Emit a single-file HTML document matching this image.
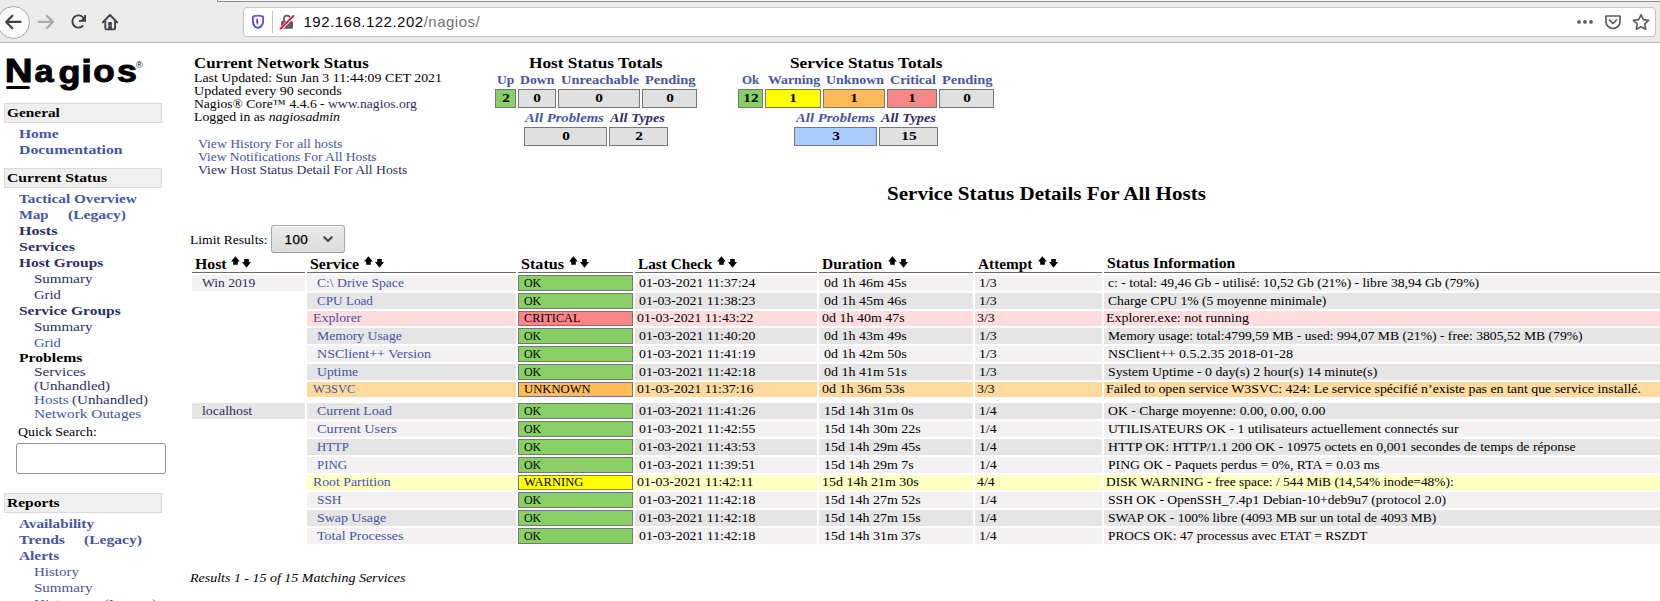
<!DOCTYPE html>
<html><head><meta charset="utf-8"><title>Nagios</title><style>
*{margin:0;padding:0;box-sizing:border-box}
html,body{width:1660px;height:601px;overflow:hidden;background:#fff}
body{position:relative;font-family:"Liberation Serif",serif}
.t{position:absolute;white-space:nowrap;line-height:20px;transform-origin:0 0}
.r{position:absolute}
.n11{font-size:12.5px;font-weight:normal;font-style:normal}
.b13{font-size:14.5px;font-weight:bold;font-style:normal}
.b12{font-size:13.3px;font-weight:bold;font-style:normal}
.th{font-size:14px;font-weight:bold;font-style:normal}
.n12{font-size:13.5px;font-weight:normal;font-style:normal}
.b16{font-size:17.8px;font-weight:bold;font-style:normal}
.b11{font-size:12.2px;font-weight:bold;font-style:normal}
.bi11{font-size:12.2px;font-weight:bold;font-style:italic}
.i11{font-size:12.4px;font-weight:normal;font-style:italic}
</style></head>
<body>
<div class="r" style="left:0px;top:0px;width:1660px;height:42px;background:#ebebea;"></div>
<div class="r" style="left:0px;top:42px;width:1660px;height:1px;background:#b6b6b0;"></div>
<div class="r" style="left:217px;top:0px;width:1443px;height:1px;background:#f6f6f6;"></div>
<div class="r" style="left:217px;top:1px;width:1443px;height:1px;background:#8e8e8e;"></div>
<div class="r" style="left:217px;top:0px;width:1px;height:2px;background:#8e8e8e;"></div>
<div class="r" style="left:-3px;top:5.5px;width:33px;height:33px;border-radius:50%;background:#fafafa;border:1px solid #a9a9a9"></div>

<svg class="r" style="left:0;top:0" width="140" height="42" viewBox="0 0 140 42">
 <g fill="none" stroke="#3d4044" stroke-width="2.1" stroke-linecap="round" stroke-linejoin="round">
  <path d="M6.2 21.9 H20.6 M12.3 15.7 L6.2 21.9 L12.3 28.2"/>
 </g>
 <g fill="none" stroke="#a9abaa" stroke-width="2.1" stroke-linecap="round" stroke-linejoin="round">
  <path d="M38.6 21.9 H53 M46.8 15.7 L53 21.9 L46.8 28.2"/>
 </g>
 <g fill="none" stroke="#3d4044" stroke-width="1.9" stroke-linecap="round">
  <path d="M83.2 17.6 A6.1 6.1 0 1 0 82.6 26"/>
 </g>
 <path d="M79 21.8 H86 V15 H84.3 V20.1 H79 Z" fill="#3d4044"/>
 <path d="M83 17.8 L84.6 16 L86 21 L80 21.5 Z" fill="#3d4044"/>
 <path d="M102.8 22.4 L110 15 L117.2 22.4" fill="none" stroke="#3d4044" stroke-width="1.9" stroke-linecap="round" stroke-linejoin="round"/>
 <path d="M105.3 20.5 V28 Q105.3 29.4 106.7 29.4 H113.7 Q115.1 29.4 115.1 28 V20.5" fill="none" stroke="#3d4044" stroke-width="1.9" stroke-linejoin="round"/>
 <rect x="108.3" y="22" width="3.5" height="7.4" fill="#3d4044"/>
 <circle cx="110.4" cy="25.6" r="0.6" fill="#bbb"/>
</svg>

<div class="r" style="left:243px;top:7px;width:1413px;height:30px;background:#fff;border:1px solid #c4c4c4;border-radius:4px"></div>
<svg class="r" style="left:245px;top:8px" width="60" height="28" viewBox="245 8 60 28">
 <defs><linearGradient id="sg" x1="0" y1="0" x2="0" y2="1"><stop offset="0" stop-color="#7c4df6"/><stop offset="1" stop-color="#3548d6"/></linearGradient></defs>
 <path d="M252.9 16.6 Q258 14.6 263.1 16.6 V21.6 Q262.8 26.6 258 28 Q253.2 26.6 252.9 21.6 Z" fill="none" stroke="url(#sg)" stroke-width="1.8"/>
 <path d="M256.3 18.8 H258 V25 Q256.8 24 256.3 23 Z" fill="#4b45e0"/>
 <rect x="272" y="11" width="1" height="22" fill="#c4c4c4"/>
 <rect x="281" y="21" width="12" height="7.8" rx="1.2" fill="#5f5f5f"/>
 <path d="M284 21.5 V18.6 A3 3 0 0 1 290 18.6 V21.5" fill="none" stroke="#5f5f5f" stroke-width="1.8"/>
 <path d="M280 29.6 L294.2 15.4" stroke="#fff" stroke-width="3.4"/>
 <path d="M280.6 28.6 L293.4 15.8" stroke="#ff0039" stroke-width="1.9" stroke-linecap="round"/>
</svg>
<div class="t" style="left:303.5px;top:12px;font-family:'Liberation Sans',sans-serif;font-size:15px;line-height:20px;letter-spacing:0.5px;color:#0c0c0d">192.168.122.202<span style="color:#737373">/nagios/</span></div>
<svg class="r" style="left:1570px;top:8px" width="85" height="28" viewBox="1570 8 85 28">
 <circle cx="1579" cy="21.9" r="1.9" fill="#5b5b5f"/><circle cx="1585" cy="21.9" r="1.9" fill="#5b5b5f"/><circle cx="1591" cy="21.9" r="1.9" fill="#5b5b5f"/>
 <path d="M1606 16 H1620 V21.5 A7 7 0 0 1 1606 21.5 Z" fill="none" stroke="#5b5b5f" stroke-width="1.7" stroke-linejoin="round"/>
 <path d="M1609.5 20 L1613 23.5 L1616.5 20" fill="none" stroke="#5b5b5f" stroke-width="1.7" stroke-linecap="round" stroke-linejoin="round"/>
 <path d="M1641 14.8 L1643.3 19.6 L1648.6 20.3 L1644.7 24 L1645.7 29.2 L1641 26.7 L1636.3 29.2 L1637.3 24 L1633.4 20.3 L1638.7 19.6 Z" fill="none" stroke="#5b5b5f" stroke-width="1.6" stroke-linejoin="round"/>
</svg>
<div class="r" style="left:0;top:0;font-family:'Liberation Sans',sans-serif;font-weight:bold;font-size:40px;line-height:60px;-webkit-text-stroke:1.2px #000;color:#000;transform-origin:0 0;transform:matrix(0.9640,0,0,0.8133,4.67,46.10)">N</div>
<div class="r" style="left:0;top:0;font-family:'Liberation Sans',sans-serif;font-weight:bold;font-size:40px;line-height:60px;-webkit-text-stroke:1.2px #000;color:#000;transform-origin:0 0;transform:matrix(0.8591,0,0,0.7870,34.44,47.29)">a</div>
<div class="r" style="left:0;top:0;font-family:'Liberation Sans',sans-serif;font-weight:bold;font-size:40px;line-height:60px;-webkit-text-stroke:1.2px #000;color:#000;transform-origin:0 0;transform:matrix(0.9000,0,0,0.7844,58.50,48.13)">g</div>
<div class="r" style="left:0;top:0;font-family:'Liberation Sans',sans-serif;font-weight:bold;font-size:40px;line-height:60px;-webkit-text-stroke:1.2px #000;color:#000;transform-origin:0 0;transform:matrix(0.9571,0,0,0.7750,81.29,47.82)">i</div>
<div class="r" style="left:0;top:0;font-family:'Liberation Sans',sans-serif;font-weight:bold;font-size:40px;line-height:60px;-webkit-text-stroke:1.2px #000;color:#000;transform-origin:0 0;transform:matrix(0.8783,0,0,0.7739,93.22,47.87)">o</div>
<div class="r" style="left:0;top:0;font-family:'Liberation Sans',sans-serif;font-weight:bold;font-size:40px;line-height:60px;-webkit-text-stroke:1.2px #000;color:#000;transform-origin:0 0;transform:matrix(0.8950,0,0,0.8043,116.91,46.50)">s</div>
<div class="r" style="left:6px;top:86px;width:24px;height:3px;background:#000;border-radius:2px"></div>
<div class="t" style="left:136px;top:58px;font-family:'Liberation Sans',sans-serif;font-size:9px;line-height:14px;color:#000">&reg;</div>
<div class="r" style="left:4px;top:103px;width:158px;height:20px;background:#efefef;border:1px solid #d9d9d9"></div>
<div class="t b12" style="left:7px;top:103px;color:#000;transform:scaleX(1.1552);">General</div>
<div class="t b12" style="left:19px;top:124px;color:#4554a6;transform:scaleX(1.1678);">Home</div>
<div class="t b12" style="left:19px;top:140px;color:#4554a6;transform:scaleX(1.1891);">Documentation</div>
<div class="r" style="left:4px;top:168px;width:158px;height:20px;background:#efefef;border:1px solid #d9d9d9"></div>
<div class="t b12" style="left:7px;top:168px;color:#000;transform:scaleX(1.1754);">Current Status</div>
<div class="t b12" style="left:19px;top:189px;color:#4554a6;transform:scaleX(1.1477);">Tactical Overview</div>
<div class="t b12" style="left:19px;top:205px;color:#4554a6;transform:scaleX(1.1069);">Map</div>
<div class="t b12" style="left:68px;top:205px;color:#4554a6;transform:scaleX(1.1696);">(Legacy)</div>
<div class="t b12" style="left:19px;top:221px;color:#2c2f63;transform:scaleX(1.2085);">Hosts</div>
<div class="t b12" style="left:19px;top:237px;color:#2c2f63;transform:scaleX(1.2005);">Services</div>
<div class="t b12" style="left:19px;top:253px;color:#2c2f63;transform:scaleX(1.1615);">Host Groups</div>
<div class="t n12" style="left:34px;top:269px;color:#2c2f63;transform:scaleX(1.1122);">Summary</div>
<div class="t n12" style="left:34px;top:285px;color:#2c2f63;transform:scaleX(1.0846);">Grid</div>
<div class="t b12" style="left:19px;top:301px;color:#2c2f63;transform:scaleX(1.1652);">Service Groups</div>
<div class="t n12" style="left:34px;top:317px;color:#2c2f63;transform:scaleX(1.1122);">Summary</div>
<div class="t n12" style="left:34px;top:333px;color:#4554a6;transform:scaleX(1.0846);">Grid</div>
<div class="t b12" style="left:19px;top:348px;color:#000;transform:scaleX(1.1807);">Problems</div>
<div class="t n12" style="left:34px;top:362px;color:#2c2f63;transform:scaleX(1.1295);">Services</div>
<div class="t n12" style="left:34px;top:376px;color:#2c2f63;transform:scaleX(1.1156);">(Unhandled)</div>
<div class="t n12" style="left:34px;top:390px;color:#4554a6;transform:scaleX(1.1320);">Hosts</div>
<div class="t n12" style="left:72px;top:390px;color:#2c2f63;transform:scaleX(1.1156);">(Unhandled)</div>
<div class="t n12" style="left:34px;top:404px;color:#4554a6;transform:scaleX(1.1305);">Network Outages</div>
<div class="t n11" style="left:18px;top:422px;color:#000;transform:scaleX(1.1069);">Quick Search:</div>
<div class="r" style="left:16px;top:443px;width:150px;height:31px;background:#fff;border:1px solid #8f8f9d;border-radius:3px"></div>
<div class="r" style="left:4px;top:493px;width:158px;height:20px;background:#efefef;border:1px solid #d9d9d9"></div>
<div class="t b12" style="left:7px;top:493px;color:#000;transform:scaleX(1.1678);">Reports</div>
<div class="t b12" style="left:19px;top:514px;color:#4554a6;transform:scaleX(1.1455);">Availability</div>
<div class="t b12" style="left:19px;top:530px;color:#4554a6;transform:scaleX(1.1641);">Trends</div>
<div class="t b12" style="left:83.5px;top:530px;color:#4554a6;transform:scaleX(1.1696);">(Legacy)</div>
<div class="t b12" style="left:19px;top:546px;color:#4554a6;transform:scaleX(1.1562);">Alerts</div>
<div class="t n12" style="left:34px;top:562px;color:#4554a6;transform:scaleX(1.1119);">History</div>
<div class="t n12" style="left:34px;top:578px;color:#4554a6;transform:scaleX(1.1122);">Summary</div>
<div class="t n12" style="left:34px;top:594px;color:#4554a6;transform:scaleX(1.1310);">Histogram</div>
<div class="t n12" style="left:104px;top:594px;color:#4554a6;transform:scaleX(1.0834);">(Legacy)</div>
<div class="t b13" style="left:194px;top:53px;color:#000;transform:scaleX(1.1621);">Current Network Status</div>
<div class="t n11" style="left:194px;top:68px;color:#000;transform:scaleX(1.1071);">Last Updated: Sun Jan 3 11:44:09 CET 2021</div>
<div class="t n11" style="left:194px;top:81px;color:#000;transform:scaleX(1.1234);">Updated every 90 seconds</div>
<div class="t n11" style="left:194px;top:94px;color:#000;transform:scaleX(1.0885);">Nagios&reg; Core&trade; 4.4.6 - <span style="color:#2c2f63">www.nagios.org</span></div>
<div class="t n11" style="left:194px;top:107px;color:#000;transform:scaleX(1.1033);">Logged in as <i>nagiosadmin</i></div>
<div class="t n11" style="left:198px;top:134px;color:#4554a6;transform:scaleX(1.0947);">View History For all hosts</div>
<div class="t n11" style="left:198px;top:147px;color:#4554a6;transform:scaleX(1.0806);">View Notifications For All Hosts</div>
<div class="t n11" style="left:198px;top:160px;color:#2c2f63;transform:scaleX(1.0962);">View Host Status Detail For All Hosts</div>
<div class="t b13" style="left:529px;top:53px;color:#000;transform:scaleX(1.1915);">Host Status Totals</div>
<div class="t b11" style="left:497px;top:70px;color:#4554a6;transform:scaleX(1.1092);">Up</div>
<div class="t b11" style="left:520px;top:70px;color:#4554a6;transform:scaleX(1.1266);">Down</div>
<div class="t b11" style="left:561px;top:70px;color:#4554a6;transform:scaleX(1.1824);">Unreachable</div>
<div class="t b11" style="left:645px;top:70px;color:#4554a6;transform:scaleX(1.1842);">Pending</div>
<div class="r" style="left:495px;top:89px;width:21px;height:19px;background:#88d066;border:1px solid #777"></div>
<div class="t b11" style="left:505.50px;top:88px;color:#000;transform-origin:50% 0;transform:translateX(-50%) scaleX(1.2564)">2</div>
<div class="r" style="left:518px;top:89px;width:38px;height:19px;background:#e0e0e0;border:1px solid #777"></div>
<div class="t b11" style="left:537.00px;top:88px;color:#000;transform-origin:50% 0;transform:translateX(-50%) scaleX(1.2564)">0</div>
<div class="r" style="left:558px;top:89px;width:82px;height:19px;background:#e0e0e0;border:1px solid #777"></div>
<div class="t b11" style="left:599.00px;top:88px;color:#000;transform-origin:50% 0;transform:translateX(-50%) scaleX(1.2564)">0</div>
<div class="r" style="left:642px;top:89px;width:55px;height:19px;background:#e0e0e0;border:1px solid #777"></div>
<div class="t b11" style="left:669.50px;top:88px;color:#000;transform-origin:50% 0;transform:translateX(-50%) scaleX(1.2564)">0</div>
<div class="t bi11" style="left:525px;top:108px;color:#4554a6;transform:scaleX(1.2064);">All Problems</div>
<div class="t bi11" style="left:610px;top:108px;color:#2c2f63;transform:scaleX(1.1797);">All Types</div>
<div class="r" style="left:524px;top:127px;width:83px;height:19px;background:#e0e0e0;border:1px solid #777"></div>
<div class="t b11" style="left:565.50px;top:126px;color:#000;transform-origin:50% 0;transform:translateX(-50%) scaleX(1.2564)">0</div>
<div class="r" style="left:609px;top:127px;width:59px;height:19px;background:#e0e0e0;border:1px solid #777"></div>
<div class="t b11" style="left:638.50px;top:126px;color:#000;transform-origin:50% 0;transform:translateX(-50%) scaleX(1.2564)">2</div>
<div class="t b13" style="left:790px;top:53px;color:#000;transform:scaleX(1.1896);">Service Status Totals</div>
<div class="t b11" style="left:742px;top:70px;color:#4554a6;transform:scaleX(1.0586);">Ok</div>
<div class="t b11" style="left:768px;top:70px;color:#4554a6;transform:scaleX(1.1330);">Warning</div>
<div class="t b11" style="left:826px;top:70px;color:#4554a6;transform:scaleX(1.1418);">Unknown</div>
<div class="t b11" style="left:890px;top:70px;color:#4554a6;transform:scaleX(1.1518);">Critical</div>
<div class="t b11" style="left:942px;top:70px;color:#4554a6;transform:scaleX(1.1842);">Pending</div>
<div class="r" style="left:738px;top:89px;width:25px;height:19px;background:#88d066;border:1px solid #777"></div>
<div class="t b11" style="left:750.50px;top:88px;color:#000;transform-origin:50% 0;transform:translateX(-50%) scaleX(1.2564)">12</div>
<div class="r" style="left:765px;top:89px;width:56px;height:19px;background:#ffff00;border:1px solid #777"></div>
<div class="t b11" style="left:793.00px;top:88px;color:#000;transform-origin:50% 0;transform:translateX(-50%) scaleX(1.2564)">1</div>
<div class="r" style="left:823px;top:89px;width:62px;height:19px;background:#ffbb55;border:1px solid #777"></div>
<div class="t b11" style="left:854.00px;top:88px;color:#000;transform-origin:50% 0;transform:translateX(-50%) scaleX(1.2564)">1</div>
<div class="r" style="left:887px;top:89px;width:50px;height:19px;background:#f88888;border:1px solid #777"></div>
<div class="t b11" style="left:912.00px;top:88px;color:#000;transform-origin:50% 0;transform:translateX(-50%) scaleX(1.2564)">1</div>
<div class="r" style="left:939px;top:89px;width:55px;height:19px;background:#e0e0e0;border:1px solid #777"></div>
<div class="t b11" style="left:966.50px;top:88px;color:#000;transform-origin:50% 0;transform:translateX(-50%) scaleX(1.2564)">0</div>
<div class="t bi11" style="left:796px;top:108px;color:#4554a6;transform:scaleX(1.2064);">All Problems</div>
<div class="t bi11" style="left:881px;top:108px;color:#2c2f63;transform:scaleX(1.1797);">All Types</div>
<div class="r" style="left:794px;top:127px;width:83px;height:19px;background:#aaccff;border:1px solid #777"></div>
<div class="t b11" style="left:835.50px;top:126px;color:#000;transform-origin:50% 0;transform:translateX(-50%) scaleX(1.2564)">3</div>
<div class="r" style="left:879px;top:127px;width:59px;height:19px;background:#e0e0e0;border:1px solid #777"></div>
<div class="t b11" style="left:908.50px;top:126px;color:#000;transform-origin:50% 0;transform:translateX(-50%) scaleX(1.2564)">15</div>
<div class="t b16" style="left:887px;top:184px;color:#000;transform:scaleX(1.1865);">Service Status Details For All Hosts</div>
<div class="t n11" style="left:190px;top:230px;color:#000;transform:scaleX(1.0887);">Limit Results:</div>
<div class="r" style="left:271px;top:225px;width:73.5px;height:28px;border:1px solid #a9a9a3;border-bottom-color:#9a9a94;border-radius:3px;background:linear-gradient(#ebebea,#dcdcdb);box-shadow:inset 0 1px 0 #fafafa"></div>
<div class="t" style="left:284.5px;top:230px;font-family:'Liberation Sans',sans-serif;font-size:13.5px;line-height:20px;letter-spacing:0.4px;color:#000;-webkit-text-stroke:0.25px #000">100</div>
<svg class="r" style="left:320px;top:233px" width="16" height="12" viewBox="0 0 16 12"><path d="M3.6 3.6 L8 8 L12.4 3.6" fill="none" stroke="#33383c" stroke-width="1.9"/></svg>
<div class="r" style="left:192px;top:272px;width:113px;height:1px;background:#6c6c6c;"></div>
<div class="t th" style="left:195px;top:255px;color:#000;transform:scaleX(1.1300);">Host</div>
<div class="r" style="left:307px;top:272px;width:209px;height:1px;background:#6c6c6c;"></div>
<div class="t th" style="left:310px;top:255px;color:#000;transform:scaleX(1.1281);">Service</div>
<div class="r" style="left:518px;top:272px;width:115px;height:1px;background:#6c6c6c;"></div>
<div class="t th" style="left:521px;top:255px;color:#000;transform:scaleX(1.1514);">Status</div>
<div class="r" style="left:635px;top:272px;width:182px;height:1px;background:#6c6c6c;"></div>
<div class="t th" style="left:638px;top:255px;color:#000;transform:scaleX(1.0907);">Last Check</div>
<div class="r" style="left:819px;top:272px;width:154px;height:1px;background:#6c6c6c;"></div>
<div class="t th" style="left:822px;top:255px;color:#000;transform:scaleX(1.1030);">Duration</div>
<div class="r" style="left:975px;top:272px;width:127px;height:1px;background:#6c6c6c;"></div>
<div class="t th" style="left:978px;top:255px;color:#000;transform:scaleX(1.0942);">Attempt</div>
<div class="r" style="left:1104px;top:272px;width:556px;height:1px;background:#6c6c6c;"></div>
<div class="t th" style="left:1107px;top:254px;color:#000;transform:scaleX(1.1260);">Status Information</div>
<svg class="r" style="left:231px;top:256px" width="21" height="12" viewBox="0 0 21 12"><path d="M4.4 0.2 L8.8 5.6 H6.8 V8.8 H2.2 V5.6 H0 Z" fill="#000"/><path d="M13.2 3 H17.8 V6 H20 L15.5 11.8 L11 6 H13.2 Z" fill="#000"/></svg>
<svg class="r" style="left:364px;top:256px" width="21" height="12" viewBox="0 0 21 12"><path d="M4.4 0.2 L8.8 5.6 H6.8 V8.8 H2.2 V5.6 H0 Z" fill="#000"/><path d="M13.2 3 H17.8 V6 H20 L15.5 11.8 L11 6 H13.2 Z" fill="#000"/></svg>
<svg class="r" style="left:569px;top:256px" width="21" height="12" viewBox="0 0 21 12"><path d="M4.4 0.2 L8.8 5.6 H6.8 V8.8 H2.2 V5.6 H0 Z" fill="#000"/><path d="M13.2 3 H17.8 V6 H20 L15.5 11.8 L11 6 H13.2 Z" fill="#000"/></svg>
<svg class="r" style="left:717px;top:256px" width="21" height="12" viewBox="0 0 21 12"><path d="M4.4 0.2 L8.8 5.6 H6.8 V8.8 H2.2 V5.6 H0 Z" fill="#000"/><path d="M13.2 3 H17.8 V6 H20 L15.5 11.8 L11 6 H13.2 Z" fill="#000"/></svg>
<svg class="r" style="left:888px;top:256px" width="21" height="12" viewBox="0 0 21 12"><path d="M4.4 0.2 L8.8 5.6 H6.8 V8.8 H2.2 V5.6 H0 Z" fill="#000"/><path d="M13.2 3 H17.8 V6 H20 L15.5 11.8 L11 6 H13.2 Z" fill="#000"/></svg>
<svg class="r" style="left:1038px;top:256px" width="21" height="12" viewBox="0 0 21 12"><path d="M4.4 0.2 L8.8 5.6 H6.8 V8.8 H2.2 V5.6 H0 Z" fill="#000"/><path d="M13.2 3 H17.8 V6 H20 L15.5 11.8 L11 6 H13.2 Z" fill="#000"/></svg>
<div class="r" style="left:192px;top:275px;width:113px;height:16px;background:#f3f1f1;"></div>
<div class="t n11" style="left:202px;top:273px;color:#2c2f63;transform:scaleX(1.0826);">Win 2019</div>
<div class="r" style="left:307px;top:275px;width:209px;height:16px;background:#f3f1f1;"></div>
<div class="r" style="left:635px;top:275px;width:182px;height:16px;background:#f3f1f1;"></div>
<div class="r" style="left:819px;top:275px;width:154px;height:16px;background:#f3f1f1;"></div>
<div class="r" style="left:975px;top:275px;width:127px;height:16px;background:#f3f1f1;"></div>
<div class="r" style="left:1104px;top:275px;width:556px;height:16px;background:#f3f1f1;"></div>
<div class="r" style="left:518px;top:275px;width:115px;height:16px;background:#88d066;border:1px solid #777"></div>
<div class="t n11" style="left:316.8px;top:273px;color:#4554a6;transform:scaleX(1.0890);">C:\ Drive Space</div>
<div class="t n11" style="left:523.5px;top:273px;color:#000;transform:scaleX(0.9550);">OK</div>
<div class="t n11" style="left:639px;top:273px;color:#000;transform:scaleX(1.1033);">01-03-2021 11:37:24</div>
<div class="t n11" style="left:823.5px;top:273px;color:#000;transform:scaleX(1.1179);">0d 1h 46m 45s</div>
<div class="t n11" style="left:978.5px;top:273px;color:#000;transform:scaleX(1.1075);">1/3</div>
<div class="t n11" style="left:1108px;top:273px;color:#000;transform:scaleX(1.0894);">c: - total: 49,46 Gb - utilisé: 10,52 Gb (21%) - libre 38,94 Gb (79%)</div>
<div class="r" style="left:307px;top:293px;width:209px;height:16px;background:#e5e5e5;"></div>
<div class="r" style="left:635px;top:293px;width:182px;height:16px;background:#e5e5e5;"></div>
<div class="r" style="left:819px;top:293px;width:154px;height:16px;background:#e5e5e5;"></div>
<div class="r" style="left:975px;top:293px;width:127px;height:16px;background:#e5e5e5;"></div>
<div class="r" style="left:1104px;top:293px;width:556px;height:16px;background:#e5e5e5;"></div>
<div class="r" style="left:518px;top:293px;width:115px;height:16px;background:#88d066;border:1px solid #777"></div>
<div class="t n11" style="left:316.8px;top:291px;color:#4554a6;transform:scaleX(1.0526);">CPU Load</div>
<div class="t n11" style="left:523.5px;top:291px;color:#000;transform:scaleX(0.9550);">OK</div>
<div class="t n11" style="left:639px;top:291px;color:#000;transform:scaleX(1.1033);">01-03-2021 11:38:23</div>
<div class="t n11" style="left:823.5px;top:291px;color:#000;transform:scaleX(1.1179);">0d 1h 45m 46s</div>
<div class="t n11" style="left:978.5px;top:291px;color:#000;transform:scaleX(1.1075);">1/3</div>
<div class="t n11" style="left:1108px;top:291px;color:#000;transform:scaleX(1.0911);">Charge CPU 1% (5 moyenne minimale)</div>
<div class="r" style="left:307px;top:311px;width:209px;height:15px;background:#ffdddd;"></div>
<div class="r" style="left:635px;top:311px;width:182px;height:15px;background:#ffdddd;"></div>
<div class="r" style="left:819px;top:311px;width:154px;height:15px;background:#ffdddd;"></div>
<div class="r" style="left:975px;top:311px;width:127px;height:15px;background:#ffdddd;"></div>
<div class="r" style="left:1104px;top:311px;width:556px;height:15px;background:#ffdddd;"></div>
<div class="r" style="left:518px;top:311px;width:115px;height:15px;background:#f88888;border:1px solid #777"></div>
<div class="t n11" style="left:312.8px;top:308px;color:#4554a6;transform:scaleX(1.1079);">Explorer</div>
<div class="t n11" style="left:523.5px;top:308px;color:#000;transform:scaleX(0.9786);">CRITICAL</div>
<div class="t n11" style="left:637px;top:308px;color:#000;transform:scaleX(1.1033);">01-03-2021 11:43:22</div>
<div class="t n11" style="left:821.5px;top:308px;color:#000;transform:scaleX(1.1179);">0d 1h 40m 47s</div>
<div class="t n11" style="left:976.5px;top:308px;color:#000;transform:scaleX(1.1075);">3/3</div>
<div class="t n11" style="left:1106px;top:308px;color:#000;transform:scaleX(1.1157);">Explorer.exe: not running</div>
<div class="r" style="left:307px;top:328px;width:209px;height:16px;background:#e5e5e5;"></div>
<div class="r" style="left:635px;top:328px;width:182px;height:16px;background:#e5e5e5;"></div>
<div class="r" style="left:819px;top:328px;width:154px;height:16px;background:#e5e5e5;"></div>
<div class="r" style="left:975px;top:328px;width:127px;height:16px;background:#e5e5e5;"></div>
<div class="r" style="left:1104px;top:328px;width:556px;height:16px;background:#e5e5e5;"></div>
<div class="r" style="left:518px;top:328px;width:115px;height:16px;background:#88d066;border:1px solid #777"></div>
<div class="t n11" style="left:316.8px;top:326px;color:#4554a6;transform:scaleX(1.0957);">Memory Usage</div>
<div class="t n11" style="left:523.5px;top:326px;color:#000;transform:scaleX(0.9550);">OK</div>
<div class="t n11" style="left:639px;top:326px;color:#000;transform:scaleX(1.1033);">01-03-2021 11:40:20</div>
<div class="t n11" style="left:823.5px;top:326px;color:#000;transform:scaleX(1.1179);">0d 1h 43m 49s</div>
<div class="t n11" style="left:978.5px;top:326px;color:#000;transform:scaleX(1.1075);">1/3</div>
<div class="t n11" style="left:1108px;top:326px;color:#000;transform:scaleX(1.0901);">Memory usage: total:4799,59 MB - used: 994,07 MB (21%) - free: 3805,52 MB (79%)</div>
<div class="r" style="left:307px;top:346px;width:209px;height:16px;background:#f3f1f1;"></div>
<div class="r" style="left:635px;top:346px;width:182px;height:16px;background:#f3f1f1;"></div>
<div class="r" style="left:819px;top:346px;width:154px;height:16px;background:#f3f1f1;"></div>
<div class="r" style="left:975px;top:346px;width:127px;height:16px;background:#f3f1f1;"></div>
<div class="r" style="left:1104px;top:346px;width:556px;height:16px;background:#f3f1f1;"></div>
<div class="r" style="left:518px;top:346px;width:115px;height:16px;background:#88d066;border:1px solid #777"></div>
<div class="t n11" style="left:316.8px;top:344px;color:#4554a6;transform:scaleX(1.1219);">NSClient++ Version</div>
<div class="t n11" style="left:523.5px;top:344px;color:#000;transform:scaleX(0.9550);">OK</div>
<div class="t n11" style="left:639px;top:344px;color:#000;transform:scaleX(1.1033);">01-03-2021 11:41:19</div>
<div class="t n11" style="left:823.5px;top:344px;color:#000;transform:scaleX(1.1179);">0d 1h 42m 50s</div>
<div class="t n11" style="left:978.5px;top:344px;color:#000;transform:scaleX(1.1075);">1/3</div>
<div class="t n11" style="left:1108px;top:344px;color:#000;transform:scaleX(1.1153);">NSClient++ 0.5.2.35 2018-01-28</div>
<div class="r" style="left:307px;top:364px;width:209px;height:16px;background:#e5e5e5;"></div>
<div class="r" style="left:635px;top:364px;width:182px;height:16px;background:#e5e5e5;"></div>
<div class="r" style="left:819px;top:364px;width:154px;height:16px;background:#e5e5e5;"></div>
<div class="r" style="left:975px;top:364px;width:127px;height:16px;background:#e5e5e5;"></div>
<div class="r" style="left:1104px;top:364px;width:556px;height:16px;background:#e5e5e5;"></div>
<div class="r" style="left:518px;top:364px;width:115px;height:16px;background:#88d066;border:1px solid #777"></div>
<div class="t n11" style="left:316.8px;top:362px;color:#4554a6;transform:scaleX(1.0987);">Uptime</div>
<div class="t n11" style="left:523.5px;top:362px;color:#000;transform:scaleX(0.9550);">OK</div>
<div class="t n11" style="left:639px;top:362px;color:#000;transform:scaleX(1.1033);">01-03-2021 11:42:18</div>
<div class="t n11" style="left:823.5px;top:362px;color:#000;transform:scaleX(1.1179);">0d 1h 41m 51s</div>
<div class="t n11" style="left:978.5px;top:362px;color:#000;transform:scaleX(1.1075);">1/3</div>
<div class="t n11" style="left:1108px;top:362px;color:#000;transform:scaleX(1.1047);">System Uptime - 0 day(s) 2 hour(s) 14 minute(s)</div>
<div class="r" style="left:307px;top:382px;width:209px;height:15px;background:#ffda9f;"></div>
<div class="r" style="left:635px;top:382px;width:182px;height:15px;background:#ffda9f;"></div>
<div class="r" style="left:819px;top:382px;width:154px;height:15px;background:#ffda9f;"></div>
<div class="r" style="left:975px;top:382px;width:127px;height:15px;background:#ffda9f;"></div>
<div class="r" style="left:1104px;top:382px;width:556px;height:15px;background:#ffda9f;"></div>
<div class="r" style="left:518px;top:382px;width:115px;height:15px;background:#ffbb55;border:1px solid #777"></div>
<div class="t n11" style="left:312.8px;top:379px;color:#4554a6;transform:scaleX(0.9959);">W3SVC</div>
<div class="t n11" style="left:523.5px;top:379px;color:#000;transform:scaleX(1.0109);">UNKNOWN</div>
<div class="t n11" style="left:637px;top:379px;color:#000;transform:scaleX(1.1033);">01-03-2021 11:37:16</div>
<div class="t n11" style="left:821.5px;top:379px;color:#000;transform:scaleX(1.1179);">0d 1h 36m 53s</div>
<div class="t n11" style="left:976.5px;top:379px;color:#000;transform:scaleX(1.1075);">3/3</div>
<div class="t n11" style="left:1106px;top:379px;color:#000;transform:scaleX(1.1093);">Failed to open service W3SVC: 424: Le service spécifié n’existe pas en tant que service installé.</div>
<div class="r" style="left:192px;top:403px;width:113px;height:16px;background:#e5e5e5;"></div>
<div class="t n11" style="left:202px;top:401px;color:#2c2f63;transform:scaleX(1.1111);">localhost</div>
<div class="r" style="left:307px;top:403px;width:209px;height:16px;background:#e5e5e5;"></div>
<div class="r" style="left:635px;top:403px;width:182px;height:16px;background:#e5e5e5;"></div>
<div class="r" style="left:819px;top:403px;width:154px;height:16px;background:#e5e5e5;"></div>
<div class="r" style="left:975px;top:403px;width:127px;height:16px;background:#e5e5e5;"></div>
<div class="r" style="left:1104px;top:403px;width:556px;height:16px;background:#e5e5e5;"></div>
<div class="r" style="left:518px;top:403px;width:115px;height:16px;background:#88d066;border:1px solid #777"></div>
<div class="t n11" style="left:316.8px;top:401px;color:#4554a6;transform:scaleX(1.1203);">Current Load</div>
<div class="t n11" style="left:523.5px;top:401px;color:#000;transform:scaleX(0.9550);">OK</div>
<div class="t n11" style="left:639px;top:401px;color:#000;transform:scaleX(1.1033);">01-03-2021 11:41:26</div>
<div class="t n11" style="left:823.5px;top:401px;color:#000;transform:scaleX(1.1180);">15d 14h 31m 0s</div>
<div class="t n11" style="left:978.5px;top:401px;color:#000;transform:scaleX(1.1075);">1/4</div>
<div class="t n11" style="left:1108px;top:401px;color:#000;transform:scaleX(1.0981);">OK - Charge moyenne: 0.00, 0.00, 0.00</div>
<div class="r" style="left:307px;top:421px;width:209px;height:16px;background:#f3f1f1;"></div>
<div class="r" style="left:635px;top:421px;width:182px;height:16px;background:#f3f1f1;"></div>
<div class="r" style="left:819px;top:421px;width:154px;height:16px;background:#f3f1f1;"></div>
<div class="r" style="left:975px;top:421px;width:127px;height:16px;background:#f3f1f1;"></div>
<div class="r" style="left:1104px;top:421px;width:556px;height:16px;background:#f3f1f1;"></div>
<div class="r" style="left:518px;top:421px;width:115px;height:16px;background:#88d066;border:1px solid #777"></div>
<div class="t n11" style="left:316.8px;top:419px;color:#4554a6;transform:scaleX(1.1444);">Current Users</div>
<div class="t n11" style="left:523.5px;top:419px;color:#000;transform:scaleX(0.9550);">OK</div>
<div class="t n11" style="left:639px;top:419px;color:#000;transform:scaleX(1.1033);">01-03-2021 11:42:55</div>
<div class="t n11" style="left:823.5px;top:419px;color:#000;transform:scaleX(1.1182);">15d 14h 30m 22s</div>
<div class="t n11" style="left:978.5px;top:419px;color:#000;transform:scaleX(1.1075);">1/4</div>
<div class="t n11" style="left:1108px;top:419px;color:#000;transform:scaleX(1.0937);">UTILISATEURS OK - 1 utilisateurs actuellement connectés sur</div>
<div class="r" style="left:307px;top:439px;width:209px;height:16px;background:#e5e5e5;"></div>
<div class="r" style="left:635px;top:439px;width:182px;height:16px;background:#e5e5e5;"></div>
<div class="r" style="left:819px;top:439px;width:154px;height:16px;background:#e5e5e5;"></div>
<div class="r" style="left:975px;top:439px;width:127px;height:16px;background:#e5e5e5;"></div>
<div class="r" style="left:1104px;top:439px;width:556px;height:16px;background:#e5e5e5;"></div>
<div class="r" style="left:518px;top:439px;width:115px;height:16px;background:#88d066;border:1px solid #777"></div>
<div class="t n11" style="left:316.8px;top:437px;color:#4554a6;transform:scaleX(1.0200);">HTTP</div>
<div class="t n11" style="left:523.5px;top:437px;color:#000;transform:scaleX(0.9550);">OK</div>
<div class="t n11" style="left:639px;top:437px;color:#000;transform:scaleX(1.1033);">01-03-2021 11:43:53</div>
<div class="t n11" style="left:823.5px;top:437px;color:#000;transform:scaleX(1.1182);">15d 14h 29m 45s</div>
<div class="t n11" style="left:978.5px;top:437px;color:#000;transform:scaleX(1.1075);">1/4</div>
<div class="t n11" style="left:1108px;top:437px;color:#000;transform:scaleX(1.1000);">HTTP OK: HTTP/1.1 200 OK - 10975 octets en 0,001 secondes de temps de réponse</div>
<div class="r" style="left:307px;top:457px;width:209px;height:16px;background:#f3f1f1;"></div>
<div class="r" style="left:635px;top:457px;width:182px;height:16px;background:#f3f1f1;"></div>
<div class="r" style="left:819px;top:457px;width:154px;height:16px;background:#f3f1f1;"></div>
<div class="r" style="left:975px;top:457px;width:127px;height:16px;background:#f3f1f1;"></div>
<div class="r" style="left:1104px;top:457px;width:556px;height:16px;background:#f3f1f1;"></div>
<div class="r" style="left:518px;top:457px;width:115px;height:16px;background:#88d066;border:1px solid #777"></div>
<div class="t n11" style="left:316.8px;top:455px;color:#4554a6;transform:scaleX(1.0343);">PING</div>
<div class="t n11" style="left:523.5px;top:455px;color:#000;transform:scaleX(0.9550);">OK</div>
<div class="t n11" style="left:639px;top:455px;color:#000;transform:scaleX(1.1033);">01-03-2021 11:39:51</div>
<div class="t n11" style="left:823.5px;top:455px;color:#000;transform:scaleX(1.1180);">15d 14h 29m 7s</div>
<div class="t n11" style="left:978.5px;top:455px;color:#000;transform:scaleX(1.1075);">1/4</div>
<div class="t n11" style="left:1108px;top:455px;color:#000;transform:scaleX(1.0960);">PING OK - Paquets perdus = 0%, RTA = 0.03 ms</div>
<div class="r" style="left:307px;top:475px;width:209px;height:15px;background:#feffc1;"></div>
<div class="r" style="left:635px;top:475px;width:182px;height:15px;background:#feffc1;"></div>
<div class="r" style="left:819px;top:475px;width:154px;height:15px;background:#feffc1;"></div>
<div class="r" style="left:975px;top:475px;width:127px;height:15px;background:#feffc1;"></div>
<div class="r" style="left:1104px;top:475px;width:556px;height:15px;background:#feffc1;"></div>
<div class="r" style="left:518px;top:475px;width:115px;height:15px;background:#ffff00;border:1px solid #777"></div>
<div class="t n11" style="left:312.8px;top:472px;color:#4554a6;transform:scaleX(1.1031);">Root Partition</div>
<div class="t n11" style="left:523.5px;top:472px;color:#000;transform:scaleX(1.0058);">WARNING</div>
<div class="t n11" style="left:637px;top:472px;color:#000;transform:scaleX(1.1082);">01-03-2021 11:42:11</div>
<div class="t n11" style="left:821.5px;top:472px;color:#000;transform:scaleX(1.1182);">15d 14h 21m 30s</div>
<div class="t n11" style="left:976.5px;top:472px;color:#000;transform:scaleX(1.1075);">4/4</div>
<div class="t n11" style="left:1106px;top:472px;color:#000;transform:scaleX(1.0727);">DISK WARNING - free space: / 544 MiB (14,54% inode=48%):</div>
<div class="r" style="left:307px;top:492px;width:209px;height:16px;background:#f3f1f1;"></div>
<div class="r" style="left:635px;top:492px;width:182px;height:16px;background:#f3f1f1;"></div>
<div class="r" style="left:819px;top:492px;width:154px;height:16px;background:#f3f1f1;"></div>
<div class="r" style="left:975px;top:492px;width:127px;height:16px;background:#f3f1f1;"></div>
<div class="r" style="left:1104px;top:492px;width:556px;height:16px;background:#f3f1f1;"></div>
<div class="r" style="left:518px;top:492px;width:115px;height:16px;background:#88d066;border:1px solid #777"></div>
<div class="t n11" style="left:316.8px;top:490px;color:#4554a6;transform:scaleX(1.0674);">SSH</div>
<div class="t n11" style="left:523.5px;top:490px;color:#000;transform:scaleX(0.9550);">OK</div>
<div class="t n11" style="left:639px;top:490px;color:#000;transform:scaleX(1.1033);">01-03-2021 11:42:18</div>
<div class="t n11" style="left:823.5px;top:490px;color:#000;transform:scaleX(1.1182);">15d 14h 27m 52s</div>
<div class="t n11" style="left:978.5px;top:490px;color:#000;transform:scaleX(1.1075);">1/4</div>
<div class="t n11" style="left:1108px;top:490px;color:#000;transform:scaleX(1.0887);">SSH OK - OpenSSH_7.4p1 Debian-10+deb9u7 (protocol 2.0)</div>
<div class="r" style="left:307px;top:510px;width:209px;height:16px;background:#e5e5e5;"></div>
<div class="r" style="left:635px;top:510px;width:182px;height:16px;background:#e5e5e5;"></div>
<div class="r" style="left:819px;top:510px;width:154px;height:16px;background:#e5e5e5;"></div>
<div class="r" style="left:975px;top:510px;width:127px;height:16px;background:#e5e5e5;"></div>
<div class="r" style="left:1104px;top:510px;width:556px;height:16px;background:#e5e5e5;"></div>
<div class="r" style="left:518px;top:510px;width:115px;height:16px;background:#88d066;border:1px solid #777"></div>
<div class="t n11" style="left:316.8px;top:508px;color:#4554a6;transform:scaleX(1.1116);">Swap Usage</div>
<div class="t n11" style="left:523.5px;top:508px;color:#000;transform:scaleX(0.9550);">OK</div>
<div class="t n11" style="left:639px;top:508px;color:#000;transform:scaleX(1.1033);">01-03-2021 11:42:18</div>
<div class="t n11" style="left:823.5px;top:508px;color:#000;transform:scaleX(1.1182);">15d 14h 27m 15s</div>
<div class="t n11" style="left:978.5px;top:508px;color:#000;transform:scaleX(1.1075);">1/4</div>
<div class="t n11" style="left:1108px;top:508px;color:#000;transform:scaleX(1.0812);">SWAP OK - 100% libre (4093 MB sur un total de 4093 MB)</div>
<div class="r" style="left:307px;top:528px;width:209px;height:16px;background:#f3f1f1;"></div>
<div class="r" style="left:635px;top:528px;width:182px;height:16px;background:#f3f1f1;"></div>
<div class="r" style="left:819px;top:528px;width:154px;height:16px;background:#f3f1f1;"></div>
<div class="r" style="left:975px;top:528px;width:127px;height:16px;background:#f3f1f1;"></div>
<div class="r" style="left:1104px;top:528px;width:556px;height:16px;background:#f3f1f1;"></div>
<div class="r" style="left:518px;top:528px;width:115px;height:16px;background:#88d066;border:1px solid #777"></div>
<div class="t n11" style="left:316.8px;top:526px;color:#4554a6;transform:scaleX(1.1200);">Total Processes</div>
<div class="t n11" style="left:523.5px;top:526px;color:#000;transform:scaleX(0.9550);">OK</div>
<div class="t n11" style="left:639px;top:526px;color:#000;transform:scaleX(1.1033);">01-03-2021 11:42:18</div>
<div class="t n11" style="left:823.5px;top:526px;color:#000;transform:scaleX(1.1182);">15d 14h 31m 37s</div>
<div class="t n11" style="left:978.5px;top:526px;color:#000;transform:scaleX(1.1075);">1/4</div>
<div class="t n11" style="left:1108px;top:526px;color:#000;transform:scaleX(1.0677);">PROCS OK: 47 processus avec ETAT = RSZDT</div>
<div class="t i11" style="left:190px;top:568px;color:#000;transform:scaleX(1.1282);">Results 1 - 15 of 15 Matching Services</div>
</body></html>
